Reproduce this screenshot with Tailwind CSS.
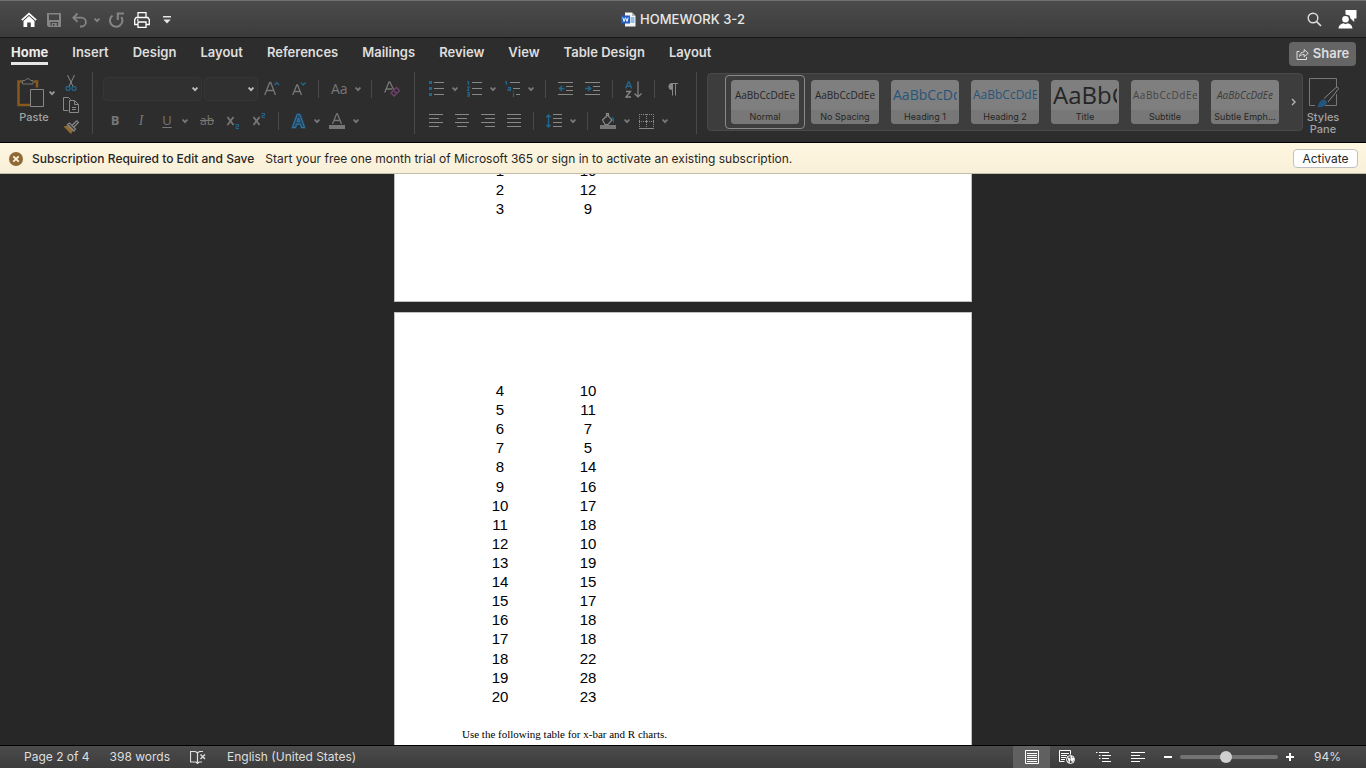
<!DOCTYPE html>
<html lang="en">
<head>
  <meta charset="UTF-8" />
  <meta name="viewport" content="width=device-width, initial-scale=1.0" />
  <title>HOMEWORK 3-2</title>
  <script src="https://cdn.jsdelivr.net/npm/@tailwindcss/browser@4"></script>
</head>
<body class="h-screen flex flex-col overflow-hidden bg-[#272727] font-[Inter,sans-serif] text-[#dedede]">

  <!-- shared icons -->
  <svg class="hidden">
    <symbol id="chev" viewBox="0 0 6 6"><path d="M.6 1.500 3 4.200 5.400 1.500" fill="none" stroke="currentColor" stroke-width="1.800"/></symbol>
  </svg>

  <!-- Title bar -->
  <header class="h-[38px] shrink-0 grid grid-cols-[1fr_auto_1fr] items-center bg-linear-to-b from-[#4b4b4b] to-[#3c3c3c] border-t border-t-[#707070] border-b border-b-[#171717] px-[9px] pt-px">
    <div class="flex items-center pl-3">
      <button aria-label="Home" class="text-white"><svg class="w-4 h-4" viewBox="0 0 16 16"><path d="M.8 8.2 8 1.6l7.2 6.6" fill="none" stroke="currentColor" stroke-width="1.8"/><path d="M2.5 9 8 4l5.500 5v6H9.800v-4.500H6.200V15H2.500z" fill="currentColor"/></svg></button>
      <button aria-label="Save" class="ml-[10px] text-[#858585]"><svg class="w-[14px] h-[14px]" viewBox="0 0 14 14"><path fill="currentColor" fill-rule="evenodd" d="M0 0h14v14H1.500L0 12.500zM2 1.500V7h10V1.500zM3.500 9v3.700h1.300V10h5v2.700H11V9zM6 11v1.700h1.500V11z"/></svg></button>
      <button aria-label="Undo" class="ml-[11px] text-[#858585]"><svg class="w-4 h-4" viewBox="0 0 16 16" fill="none" stroke="currentColor" stroke-width="1.800"><path d="M5.500 1.500 1.300 5.700l4.200 4.200M1.500 5.700h8a4.400 4.400 0 0 1 0 8.800H8"/></svg></button>
      <button aria-label="Undo history" class="ml-[6px] text-[#858585]"><svg class="w-[6px] h-[6px]"><use href="#chev"/></svg></button>
      <button aria-label="Repeat" class="ml-[9px] text-[#858585]"><svg class="w-4 h-4" viewBox="0 0 16 16" fill="none" stroke="currentColor" stroke-width="2"><path d="M3.500 3.500a6.200 6.200 0 1 0 8.800 1.500M15 1.500H8.800V8"/></svg></button>
      <button aria-label="Print" class="ml-[9px] text-white"><svg class="w-4 h-4" viewBox="0 0 16 16" fill="none" stroke="currentColor" stroke-width="1.300"><path d="M4 5.500V.7h8v4.800M3.500 12.500H.7v-5l1.500-2h11.600l1.500 2v5h-2.800M4 10h8v5.300H4z"/><path d="M3 8h1.500"/></svg></button>
      <button aria-label="Customize toolbar" class="ml-[13px] text-[#e6e6e6]"><svg class="w-[8px] h-[8px]" viewBox="0 0 8 8" fill="currentColor"><path d="M0 0h8v1.500H0zM.3 3.500h7.400L4 7.500z"/></svg></button>
    </div>
    <h1 class="flex items-center gap-1 text-[13px] font-medium text-[#e8e8e8]">
      <svg class="w-[15px] h-[15px]" viewBox="0 0 15 15"><path d="M4 .5h7l3.500 3.500v10.500H4z" fill="#f4f4f4"/><path d="M11 .5 14.500 4H11z" fill="#b5b5b5"/><path d="M9.500 6h4M9.500 8h4M9.500 10h4" stroke="#3e86d8"/><rect y="3.500" width="9" height="8" fill="#1f5fc4"/><path d="m1.800 5.500 1.200 4 1.500-3.800 1.500 3.800 1.200-4" fill="none" stroke="#fff"/></svg>
      HOMEWORK 3-2
    </h1>
    <div class="flex items-center justify-end gap-4">
      <button aria-label="Search"><svg class="w-[15px] h-[15px]" viewBox="0 0 15 15" fill="none" stroke="currentColor"><circle cx="6" cy="6" r="4.800" stroke-width="1.400"/><path d="m9.500 9.500 4.500 4.500" stroke-width="1.700"/></svg></button>
      <button aria-label="Account" class="text-white"><svg class="w-[19px] h-[19px]" viewBox="0 0 19 19" fill="currentColor"><path d="M7.500 0h11v8.500H16.200V12L12.500 8.500 11.500 5.500 7.500 4.500z"/><circle cx="7.500" cy="9.300" r="3.300"/><path d="M.5 18.500c.3-3.500 2.800-5 5-5.300l2 1 2-1c2.500.3 4.700 1.800 5 5.300z"/></svg></button>
    </div>
  </header>

  <!-- Ribbon tabs -->
  <div class="h-[29px] shrink-0 flex items-start justify-between bg-[#2d2d2d] pl-[11px] pr-[10px]">
    <nav class="flex gap-6 pt-1 text-[13px] leading-5 font-semibold">
      <a href="#" class="border-b-3 border-[#e6e6e6] font-bold text-[#ececec]">Home</a>
      <a href="#">Insert</a>
      <a href="#">Design</a>
      <a href="#">Layout</a>
      <a href="#">References</a>
      <a href="#">Mailings</a>
      <a href="#">Review</a>
      <a href="#">View</a>
      <a href="#">Table Design</a>
      <a href="#">Layout</a>
    </nav>
    <button class="mt-1 h-6 w-[67px] flex items-center justify-center gap-1 rounded bg-[#656565] text-[13px] font-semibold">
      <svg class="w-[13px] h-[13px]" viewBox="0 0 13 13" fill="none" stroke="currentColor"><path d="M3.500 3.500H1v8h9.500V9"/><path d="M3.500 8.500c.3-3 2-4.500 4.700-4.500V1.500l4 3.700-4 3.600V6.500c-2 0-3.500.500-4.700 2z"/></svg>
      Share
    </button>
  </div>

  <!-- Ribbon -->
  <div class="h-[76px] shrink-0 flex items-start bg-[#2d2d2d] border-b border-black pt-[5px] text-[#777]">

    <div class="flex w-[92px] pl-[17px]">
      <div class="flex flex-col w-[46px] pt-[5px]">
        <div class="flex items-center gap-[4px]">
          <svg class="w-7 h-[31px]" viewBox="0 0 28 31" fill="none"><path d="M5 4.500H1.500v23.500H13M17 4.500h3v6" stroke="#87591c" stroke-width="2.500"/><path d="M5.500 7V3.500H8a3 3 0 0 1 5.500 0H16V7z" stroke="#777"/><path d="M13.500 12.500h13v17h-13z" stroke="#888"/></svg>
          <button aria-label="Paste options" class="text-[#9a9a9a]"><svg class="w-[6px] h-[6px]"><use href="#chev"/></svg></button>
        </div>
        <button class="mt-px w-[34px] text-[11px] leading-4 font-medium text-[#a3a3a3]">Paste</button>
      </div>
      <div class="flex flex-col gap-[6px] pt-[3px]">
        <button aria-label="Cut"><svg class="w-4 h-4" viewBox="0 0 16 16" fill="none"><path d="M4.500 0 10 11.500M11.500 0 6 11.500" stroke="#888"/><circle cx="5" cy="13.500" r="2" stroke="#24658a" stroke-width="1.300"/><circle cx="11" cy="13.500" r="2" stroke="#24658a" stroke-width="1.300"/></svg></button>
        <button aria-label="Copy"><svg class="w-4 h-4" viewBox="0 0 16 16" fill="none" stroke="#888"><path d="M5.500 13.500h-5V.5h5l2 2M6.500 3.500h5l4 4v8h-9zM11.500 3.500v4h4M9 10.500h4M9 12.500h4"/></svg></button>
        <button aria-label="Format painter"><svg class="w-4 h-4" viewBox="0 0 16 16" fill="none"><path d="M.5 7.500 6 6l4.500 4.500L8 15z" fill="#8f6b34"/><path d="M4.500 5.500 6.500 4l6 6-1.500 2zM9 6.500l4.500-4.500M11 8l4.500-4.500-2-2" stroke="#888" stroke-width="1.200"/></svg></button>
      </div>
    </div>

    <!-- Font -->
    <div class="h-[62px] w-[323px] border-x border-[#494949] pl-[10px] pr-3">
      <div class="h-[34px] flex items-center">
        <div class="grid items-center w-[99px]">
          <select aria-label="Font" class="appearance-none col-start-1 row-start-1 h-6 w-full rounded-sm border border-[#363636] bg-[#303030]"><option></option></select>
          <svg class="col-start-1 row-start-1 justify-self-end mr-1 w-[6px] h-[6px] text-[#c0c0c0] pointer-events-none"><use href="#chev"/></svg>
        </div>
        <div class="grid items-center w-[54px] ml-[2px]">
          <select aria-label="Font size" class="appearance-none col-start-1 row-start-1 h-6 w-full rounded-sm border border-[#363636] bg-[#303030]"><option></option></select>
          <svg class="col-start-1 row-start-1 justify-self-end mr-1 w-[6px] h-[6px] text-[#c0c0c0] pointer-events-none"><use href="#chev"/></svg>
        </div>
        <button aria-label="Increase font size" class="ml-[6px]"><svg class="w-4 h-4" viewBox="0 0 16 16" fill="none"><path d="M.7 14 5.700 1.500h1L11.500 14M2.500 9.500h7.500" stroke="#777" stroke-width="1.300"/><path d="m10.500 4 2.200-2.500L15 4" stroke="#24658a" stroke-width="1.300"/></svg></button>
        <button aria-label="Decrease font size" class="ml-[12px]"><svg class="w-4 h-4" viewBox="0 0 16 16" fill="none"><path d="M.7 14 4.800 4h.8L9.500 14M2.200 10.500H8" stroke="#777" stroke-width="1.300"/><path d="m9 1.500 2.200 2.500 2.300-2.500" stroke="#24658a" stroke-width="1.300"/></svg></button>
        <span class="w-px h-[18px] bg-[#494949] ml-[10px] mr-3"></span>
        <button class="flex items-center gap-[7px] font-['Open_Sans',sans-serif] text-sm">Aa <svg class="w-[6px] h-[6px]"><use href="#chev"/></svg></button>
        <span class="w-px h-[18px] bg-[#494949] ml-[10px] mr-3"></span>
        <button aria-label="Clear formatting"><svg class="w-4 h-4" viewBox="0 0 16 16" fill="none"><path d="M.7 11.500 5 1h.8l4 8M2.500 8H8" stroke="#777" stroke-width="1.300"/><path d="m7 12 5.500-5.500 3 3L10 15zM9.500 9.500l3 3" stroke="#74406f" stroke-width="1.300"/></svg></button>
      </div>
      <div class="h-[30px] flex items-center gap-3 pl-[5px] font-['Open_Sans',sans-serif] text-[13px]">
        <button class="w-[14px] font-bold">B</button>
        <button class="w-[14px] italic font-['Liberation_Serif',serif] text-sm">I</button>
        <button class="flex items-center gap-2"><span class="w-[14px] underline underline-offset-2">U</span> <svg class="w-[6px] h-[6px]"><use href="#chev"/></svg></button>
        <button class="w-[14px] line-through text-xs flex justify-center">ab</button>
        <button aria-label="Subscript"><svg class="w-[14px] h-4" viewBox="0 0 14 16" fill="none"><path d="m1.500 4 6 8M7.500 4l-6 8" stroke="#777" stroke-width="1.800"/><path d="M9.500 11.500h3v2h-2.500v2h3" stroke="#24658a"/></svg></button>
        <button aria-label="Superscript"><svg class="w-[14px] h-4" viewBox="0 0 14 16" fill="none"><path d="m1.500 4 6 8M7.500 4l-6 8" stroke="#777" stroke-width="1.800"/><path d="M9.500.5h3v2h-2.500v2h3" stroke="#24658a"/></svg></button>
        <span class="w-px h-[18px] bg-[#494949]"></span>
        <button aria-label="Text effects" class="flex items-center gap-2"><svg class="w-[15px] h-4" viewBox="0 0 15 16" fill="none"><path d="M1.500 14.500 6.200 1.500h2.600l4.700 13h-3l-1-3.500h-4l-1 3.500zM6.300 8.500h2.400L7.500 5z" stroke="#1d4a6b" stroke-width="2.500"/><path d="M1.500 14.500 6.200 1.500h2.600l4.700 13h-3l-1-3.500h-4l-1 3.500zM6.300 8.500h2.400L7.500 5z" stroke="#4580a5" stroke-width=".8"/></svg><svg class="w-[6px] h-[6px]"><use href="#chev"/></svg></button>
        <button aria-label="Font color" class="flex items-center gap-2 -ml-[3px]"><svg class="w-4 h-4" viewBox="0 0 16 16" fill="none"><path d="M3.500 11 7.600.8h.8L12.500 11M5 7.500h6" stroke="#777" stroke-width="1.300"/><path d="M0 12h16v4H0z" fill="#777"/></svg><svg class="w-[6px] h-[6px]"><use href="#chev"/></svg></button>
      </div>
    </div>

    <!-- Paragraph -->
    <div class="h-[62px] w-[282px] border-r border-[#494949] pl-[14px]">
      <div class="h-[34px] flex items-center gap-3">
        <div class="flex items-center gap-[9px]">
          <button aria-label="Bullets" class="flex items-center gap-2"><svg class="w-[15px] h-4" viewBox="0 0 15 16"><path d="M0 0h3v3H0zM0 6h3v3H0zM0 12h3v3H0z" fill="#24658a"/><path d="M5 1.500h10M5 7.500h10M5 13.500h10" stroke="#888"/></svg><svg class="w-[6px] h-[6px]"><use href="#chev"/></svg></button>
          <button aria-label="Numbering" class="flex items-center gap-2"><svg class="w-[15px] h-4" viewBox="0 0 15 16" fill="none"><path d="M0 .8h1.500V4M0 6h2.300L.5 9.300h2M0 11.500h2.200v3.700H0M.5 13.300h1.700" stroke="#24658a" stroke-width="1.200"/><path d="M5 1.500h10M5 7.500h10M5 13.500h10" stroke="#888"/></svg><svg class="w-[6px] h-[6px]"><use href="#chev"/></svg></button>
          <button aria-label="Multilevel list" class="flex items-center gap-2"><svg class="w-[15px] h-4" viewBox="0 0 15 16" fill="none"><path d="M0 .8h1.500V4M3 6.500h2.500v3H3.200V8h2.300M8.500 12v4M8.500 10v1" stroke="#24658a" stroke-width="1.200"/><path d="M5 1.500h10M8 7.500h7M11 13.500h4" stroke="#888"/></svg><svg class="w-[6px] h-[6px]"><use href="#chev"/></svg></button>
        </div>
        <span class="w-px h-[18px] bg-[#494949] -ml-px"></span>
        <button aria-label="Decrease indent"><svg class="w-[15px] h-4" viewBox="0 0 15 16" fill="none"><path d="M0 1.500h15M8 5.500h7M8 9.500h7M0 13.500h15" stroke="#888"/><path d="M6.500 7.500h-5M4 5 1.300 7.500 4 10" stroke="#24658a" stroke-width="1.400"/></svg></button>
        <button aria-label="Increase indent"><svg class="w-[15px] h-4" viewBox="0 0 15 16" fill="none"><path d="M0 1.500h15M8 5.500h7M8 9.500h7M0 13.500h15" stroke="#888"/><path d="M0 7.500h5.500M3 5l2.700 2.500L3 10" stroke="#24658a" stroke-width="1.400"/></svg></button>
        <span class="w-px h-[18px] bg-[#494949]"></span>
        <button aria-label="Sort"><svg class="w-[17px] h-[17px]" viewBox="0 0 17 17" fill="none"><path d="M.7 7.500 3.300 1h.8L6.700 7.500M1.800 5.300h4" stroke="#24658a" stroke-width="1.500"/><path d="M1 10.500h4.500L1 16h5" stroke="#888" stroke-width="1.300"/><path d="M13 .5V16M9.500 12.500 13 16l3.500-3.500" stroke="#888" stroke-width="1.200"/></svg></button>
        <span class="w-px h-[18px] bg-[#494949]"></span>
        <button aria-label="Show formatting marks"><svg class="w-[11px] h-[13px]" viewBox="0 0 11 13"><path d="M11 .5H4" stroke="#888"/><path d="M5 0a3.500 3.500 0 0 0 0 7z" fill="#888"/><path d="M5.500 0v12.500M8.500 0v12.500" stroke="#888"/></svg></button>
      </div>
      <div class="h-[30px] flex items-center gap-3">
        <button aria-label="Align left"><svg class="w-[14px] h-[14px]" viewBox="0 0 14 14" stroke="#888"><path d="M0 .5h14M0 4.500h10M0 8.500h14M0 12.500h10"/></svg></button>
        <button aria-label="Center"><svg class="w-[14px] h-[14px]" viewBox="0 0 14 14" stroke="#888"><path d="M0 .5h14M2 4.500h10M0 8.500h14M2 12.500h10"/></svg></button>
        <button aria-label="Align right"><svg class="w-[14px] h-[14px]" viewBox="0 0 14 14" stroke="#888"><path d="M0 .5h14M4 4.500h10M0 8.500h14M4 12.500h10"/></svg></button>
        <button aria-label="Justify"><svg class="w-[14px] h-[14px]" viewBox="0 0 14 14" stroke="#888"><path d="M0 .5h14M0 4.500h14M0 8.500h14M0 12.500h14"/></svg></button>
        <span class="w-px h-[18px] bg-[#494949]"></span>
        <button aria-label="Line spacing" class="flex items-center gap-2"><svg class="w-4 h-[14px]" viewBox="0 0 16 14" fill="none"><path d="M7 .5h9M7 4.500h9M7 8.500h9M7 12.500h9" stroke="#888"/><path d="M2.500 1v12M.3 3.300 2.500 1l2.200 2.300M.3 10.700 2.500 13l2.200-2.300" stroke="#24658a" stroke-width="1.400"/></svg><svg class="w-[6px] h-[6px]"><use href="#chev"/></svg></button>
        <span class="w-px h-[18px] bg-[#494949] -ml-px"></span>
        <div class="flex items-center gap-[9px]">
          <button aria-label="Shading" class="flex items-center gap-2"><svg class="w-4 h-4" viewBox="0 0 16 16" fill="none"><path d="m2.500 7 5-5 4.500 5-4 4.500H5zM6.500 4.500V.5h2V3" stroke="#888" stroke-width="1.200"/><path d="M12 3.500c2 .500 2.500 3 2 6.500l-1.500-2z" fill="#24658a"/><path d="M0 12h16v4H0z" fill="#777"/></svg><svg class="w-[6px] h-[6px]"><use href="#chev"/></svg></button>
          <button aria-label="Borders" class="flex items-center gap-2"><svg class="w-[15px] h-4" viewBox="0 0 15 16" fill="none" stroke="#888"><path d="M0 1.500h15M0 8.500h15M.5 1v13M7.500 1v13M14.500 1v13" stroke-dasharray="1 1"/><path d="M0 15.500h15M6 8.500h3"/></svg><svg class="w-[6px] h-[6px]"><use href="#chev"/></svg></button>
        </div>
      </div>
    </div>

    <!-- Styles -->
    <div class="mt-px ml-[10px] h-[58px] w-[596px] flex items-center rounded-sm border border-[#494949] bg-[#3d3d3d] pl-[17px] text-[9px] text-[#252525]">
      <button class="w-20 h-[54px] flex items-center justify-center rounded-sm border border-[#8a8a8a]">
        <span class="w-[68px] h-11 flex flex-col rounded-sm overflow-hidden bg-[#7f7f7f]"><span class="h-[30px] flex items-center justify-center font-['Open_Sans',sans-serif] text-[10px]">AaBbCcDdEe</span><span class="h-[14px] leading-[14px] bg-[#777]">Normal</span></span>
      </button>
      <div class="flex gap-3 ml-[6px]">
        <button class="w-[68px] h-11 flex flex-col rounded-sm overflow-hidden bg-[#7f7f7f]"><span class="w-full h-[30px] flex items-center justify-center font-['Open_Sans',sans-serif] text-[10px]">AaBbCcDdEe</span><span class="w-full h-[14px] leading-[14px] bg-[#777]">No Spacing</span></button>
        <button class="w-[68px] h-11 flex flex-col rounded-sm overflow-hidden bg-[#7f7f7f]"><span class="mx-[2px] w-16 h-[30px] flex items-center overflow-hidden font-['Open_Sans',sans-serif] text-sm text-[#27547a]">AaBbCcDdEe</span><span class="w-full h-[14px] leading-[14px] bg-[#777]">Heading 1</span></button>
        <button class="w-[68px] h-11 flex flex-col rounded-sm overflow-hidden bg-[#7f7f7f]"><span class="mx-[2px] w-16 h-[30px] flex items-center overflow-hidden font-['Open_Sans',sans-serif] text-xs text-[#27547a]">AaBbCcDdEe</span><span class="w-full h-[14px] leading-[14px] bg-[#777]">Heading 2</span></button>
        <button class="w-[68px] h-11 flex flex-col rounded-sm overflow-hidden bg-[#7f7f7f]"><span class="mx-[2px] w-16 h-[30px] flex items-center overflow-hidden font-['Open_Sans',sans-serif] text-2xl">AaBbCcDdEe</span><span class="w-full h-[14px] leading-[14px] bg-[#777]">Title</span></button>
        <button class="w-[68px] h-11 flex flex-col rounded-sm overflow-hidden bg-[#7f7f7f]"><span class="mx-[2px] w-16 h-[30px] flex items-center overflow-hidden font-['Open_Sans',sans-serif] text-[10px] tracking-wider text-[#444]">AaBbCcDdEe</span><span class="w-full h-[14px] leading-[14px] bg-[#777]">Subtitle</span></button>
        <button class="w-[68px] h-11 flex flex-col rounded-sm overflow-hidden bg-[#7f7f7f]"><span class="w-full h-[30px] flex items-center justify-center font-['Open_Sans',sans-serif] text-[10px] italic text-[#3a3a3a]">AaBbCcDdEe</span><span class="w-full h-[14px] leading-[14px] whitespace-nowrap bg-[#777]">Subtle Emph...</span></button>
      </div>
      <button aria-label="More styles" class="ml-3 text-[#b5b5b5]"><svg class="w-[6px] h-[8px]" viewBox="0 0 6 8" fill="none"><path d="m1 1 3 3-3 3" stroke="currentColor" stroke-width="1.400"/></svg></button>
    </div>
    <button class="ml-[3px] mt-[5px] w-[34px] flex flex-col items-center text-[11px] leading-3 font-medium text-[#a3a3a3]">
      <svg class="w-8 h-8 shrink-0" viewBox="0 0 32 32" fill="none"><path d="M8 28.500H2.500v-27h27v9M29.500 17v11.500H18" stroke="#777"/><path d="M17 21.500 28.500 11c2-1.500 3.500-.5 2.500 1.500L21 25" stroke="#888"/><path d="M10 30c2-1 1-6 6-7.500 3 0 4.500 2 3.500 4.500-2 3.500-6.500 3.500-9.500 3z" fill="#24557e"/></svg>
      <span class="mt-[2px]">Styles Pane</span>
    </button>
  </div>

  <!-- Subscription notice -->
  <div class="h-[31px] shrink-0 flex items-center bg-linear-to-b from-[#fff6e1] to-[#f9f0d9] border-b border-[#c4bca8] pt-px pl-[9px] pr-2 text-xs text-[#262626]">
    <svg class="w-[14px] h-[14px] mr-[9px]" viewBox="0 0 14 14"><circle cx="7" cy="7" r="7" fill="#8f6a37"/><path d="m4.300 4.300 5.400 5.400m0-5.400L4.300 9.700" stroke="#fff6e1" stroke-width="1.800"/></svg>
    <strong class="font-medium mr-[11px]">Subscription Required to Edit and Save</strong>
    <span>Start your free one month trial of Microsoft 365 or sign in to activate an existing subscription.</span>
    <button class="ml-auto h-[19px] w-[65px] rounded-sm border border-[#c0c0c0] bg-white">Activate</button>
  </div>

  <!-- Document -->
  <main class="flex-1 min-h-0 overflow-hidden flex flex-col items-center gap-[10px] font-['Liberation_Sans',sans-serif] text-black">
    <section class="w-[578px] h-32 shrink-0 overflow-hidden bg-white border border-t-0 border-[#c0c0c0] pl-[61px]">
      <table class="-mt-[13px] text-[15px] leading-[19px] text-center">
        <tbody>
          <tr><td class="w-[88px]">1</td><td class="w-[88px]">10</td></tr>
          <tr><td>2</td><td>12</td></tr>
          <tr><td>3</td><td>9</td></tr>
        </tbody>
      </table>
    </section>
    <section class="w-[578px] h-[748px] shrink-0 bg-white border border-[#c0c0c0] pl-[61px] pt-[68px]">
      <table class="h-[325px] text-[15px] leading-[19px] text-center">
        <tbody>
          <tr><td class="w-[88px]">4</td><td class="w-[88px]">10</td></tr>
          <tr><td>5</td><td>11</td></tr>
          <tr><td>6</td><td>7</td></tr>
          <tr><td>7</td><td>5</td></tr>
          <tr><td>8</td><td>14</td></tr>
          <tr><td>9</td><td>16</td></tr>
          <tr><td>10</td><td>17</td></tr>
          <tr><td>11</td><td>18</td></tr>
          <tr><td>12</td><td>10</td></tr>
          <tr><td>13</td><td>19</td></tr>
          <tr><td>14</td><td>15</td></tr>
          <tr><td>15</td><td>17</td></tr>
          <tr><td>16</td><td>18</td></tr>
          <tr><td>17</td><td>18</td></tr>
          <tr><td>18</td><td>22</td></tr>
          <tr><td>19</td><td>28</td></tr>
          <tr><td>20</td><td>23</td></tr>
        </tbody>
      </table>
      <p class="mt-5 ml-[6px] font-['Liberation_Serif',serif] text-[11px] leading-4">Use the following table for x-bar and R charts.</p>
    </section>
  </main>

  <!-- Status bar -->
  <footer class="h-[23px] shrink-0 flex items-center bg-linear-to-b from-[#4b4b4b] to-[#3c3c3c] border-t border-black pl-6 text-xs">
    <span class="mr-5">Page 2 of 4</span>
    <span class="mr-5">398 words</span>
    <button aria-label="Proofing" class="mr-[21px]"><svg class="w-4 h-[13px]" viewBox="0 0 16 13" fill="none" stroke="currentColor"><path d="M7.500 11.500V2Q6 .5 4 .5H.5v10.500H6l1.500 1.500 1.500-1.500H12M7.500 2Q9 .5 10.500.5H13" stroke-width="1.200"/><path d="m10.500 3.500 4.500 4.500m0-4.500L10.500 8" stroke-width="1.400"/></svg></button>
    <span>English (United States)</span>
    <div class="ml-auto flex items-center h-full">
      <button aria-label="Print layout" class="w-[37px] h-full grid place-items-center bg-[#606060] text-white"><svg class="w-[14px] h-[14px]" viewBox="0 0 14 14" fill="none" stroke="currentColor"><path d="M.5.5h13v13H.5zM2 3.500h10M2 5.500h10M2 7.500h10M2 9.500h10M2 11.500h10"/></svg></button>
      <button aria-label="Web layout" class="ml-[9px] text-white"><svg class="w-4 h-[14px]" viewBox="0 0 16 14" fill="none" stroke="currentColor"><path d="M5.500 11.500h-5V.5h11v4M2 3.500h8M2 5.500h6M2 7.500h5M2 9.500h4"/><circle cx="11.500" cy="9.500" r="4" fill="#444"/><path d="M8.500 7.500 11 9l-1 4M12 6l1 2 2 .5-1.500 3-1.500-1z" fill="currentColor"/></svg></button>
      <button aria-label="Outline" class="ml-[21px] text-white"><svg class="w-[15px] h-3" viewBox="0 0 15 12" stroke="currentColor"><path d="M0 1.500h1.500M3 1.500h10M3 4.500h1.500M6 4.500h9M3 7.500h1.500M6 7.500h7M6 10.500h9"/></svg></button>
      <button aria-label="Draft" class="ml-[20px] text-white"><svg class="w-[14px] h-3" viewBox="0 0 14 12" stroke="currentColor"><path d="M0 1.500h14M0 4.500h9M0 7.500h14M0 10.500h9"/></svg></button>
      <button aria-label="Zoom out" class="ml-[19px] text-white"><svg class="w-2 h-2" viewBox="0 0 8 8"><path d="M0 4h8" stroke="currentColor" stroke-width="2"/></svg></button>
      <input type="range" aria-label="Zoom" min="0" max="100" value="47" class="appearance-none mx-2 w-[98px] h-1 rounded-full bg-[#737373] [&::-webkit-slider-thumb]:appearance-none [&::-webkit-slider-thumb]:size-3 [&::-webkit-slider-thumb]:rounded-full [&::-webkit-slider-thumb]:bg-[#cfcfcf]" />
      <button aria-label="Zoom in" class="text-white"><svg class="w-2 h-2" viewBox="0 0 8 8"><path d="M0 4h8M4 0v8" stroke="currentColor" stroke-width="2"/></svg></button>
      <span class="w-[72px] pl-5">94%</span>
    </div>
  </footer>

</body>
</html>
